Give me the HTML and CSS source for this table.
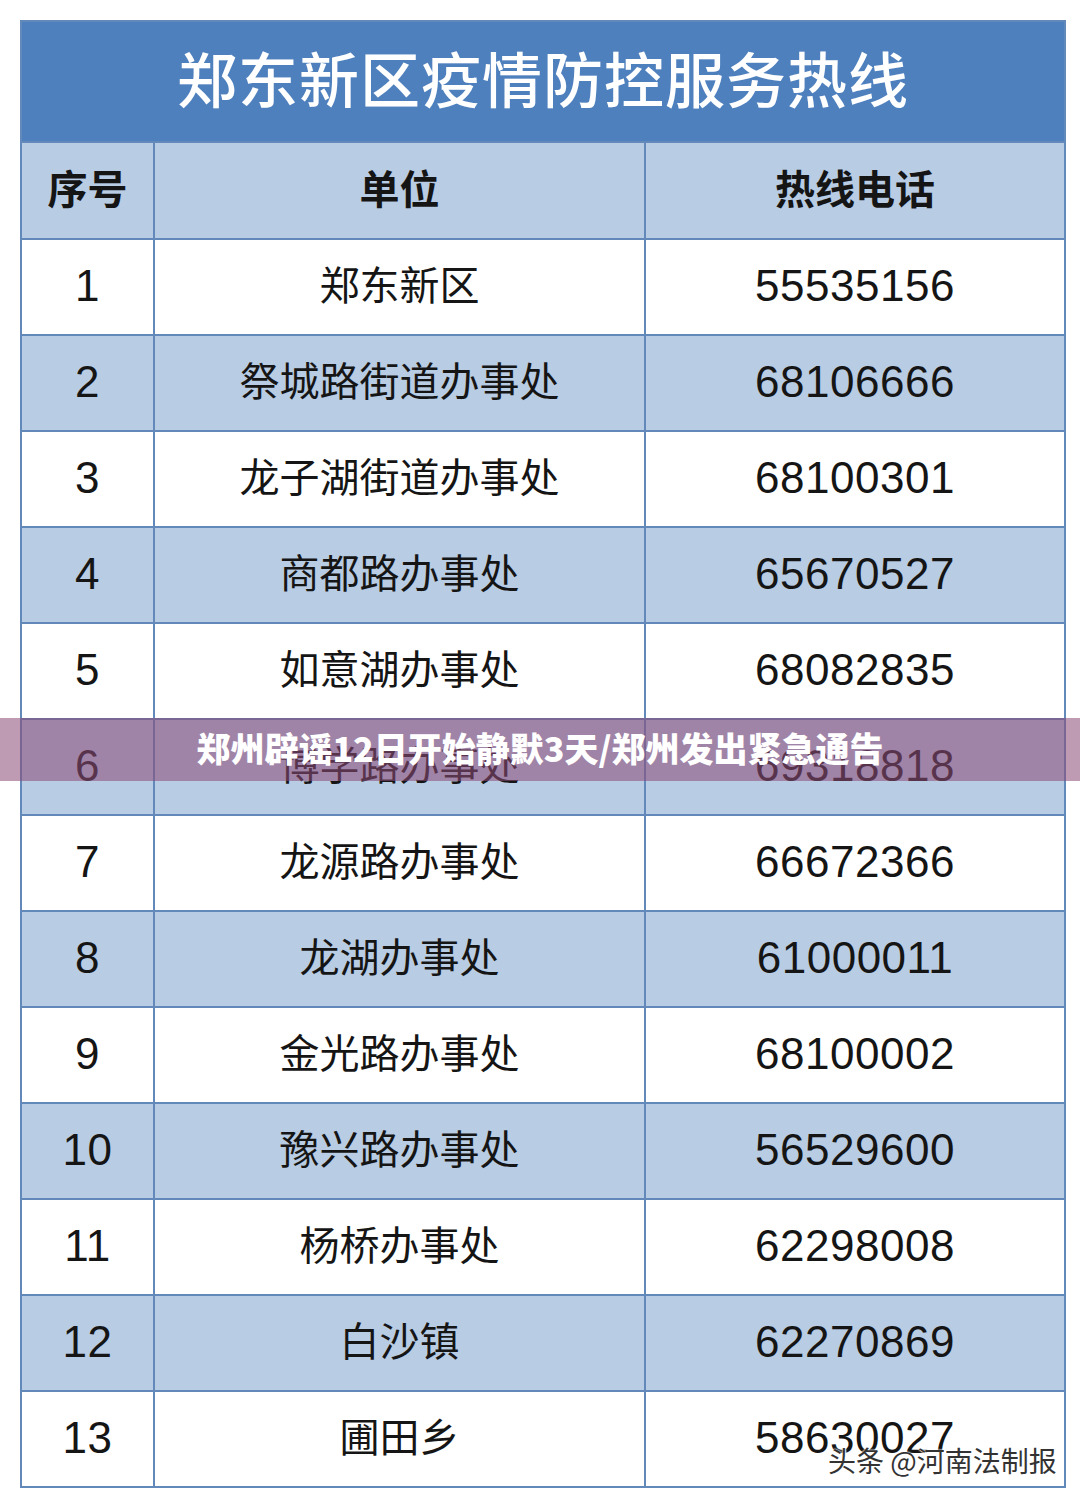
FILE: index.html
```html
<!DOCTYPE html>
<html lang="zh-CN">
<head>
<meta charset="utf-8">
<title>郑东新区疫情防控服务热线</title>
<link rel="stylesheet" href="styles.css">
</head>
<body>
<div class="page">
  <div class="sheet">
    <div class="title">郑东新区疫情防控服务热线</div>
    <div class="row head">
      <div class="cell">序号</div>
      <div class="cell">单位</div>
      <div class="cell">热线电话</div>
    </div>
    <div class="row"><div class="cell num">1</div><div class="cell">郑东新区</div><div class="cell num">55535156</div></div>
    <div class="row alt"><div class="cell num">2</div><div class="cell">祭城路街道办事处</div><div class="cell num">68106666</div></div>
    <div class="row"><div class="cell num">3</div><div class="cell">龙子湖街道办事处</div><div class="cell num">68100301</div></div>
    <div class="row alt"><div class="cell num">4</div><div class="cell">商都路办事处</div><div class="cell num">65670527</div></div>
    <div class="row"><div class="cell num">5</div><div class="cell">如意湖办事处</div><div class="cell num">68082835</div></div>
    <div class="row alt"><div class="cell num">6</div><div class="cell">博学路办事处</div><div class="cell num">69318818</div></div>
    <div class="row"><div class="cell num">7</div><div class="cell">龙源路办事处</div><div class="cell num">66672366</div></div>
    <div class="row alt"><div class="cell num">8</div><div class="cell">龙湖办事处</div><div class="cell num">61000011</div></div>
    <div class="row"><div class="cell num">9</div><div class="cell">金光路办事处</div><div class="cell num">68100002</div></div>
    <div class="row alt"><div class="cell num">10</div><div class="cell">豫兴路办事处</div><div class="cell num">56529600</div></div>
    <div class="row"><div class="cell num">11</div><div class="cell">杨桥办事处</div><div class="cell num">62298008</div></div>
    <div class="row alt"><div class="cell num">12</div><div class="cell">白沙镇</div><div class="cell num">62270869</div></div>
    <div class="row"><div class="cell num">13</div><div class="cell">圃田乡</div><div class="cell num">58630027</div></div>
  </div>
  <div class="banner">郑州辟谣12日开始静默3天/郑州发出紧急通告</div>
  <div class="mark">头条 @河南法制报</div>
</div>
</body>
</html>
```
FILE: styles.css
```css
html, body {
  margin: 0;
  padding: 0;
  background: #ffffff;
}
.page {
  position: relative;
  width: 1080px;
  height: 1501px;
  padding: 20px 0 0 20px;
  box-sizing: border-box;
  font-family: "Noto Sans CJK SC", "Noto Sans", sans-serif;
  color: #151515;
}
.sheet {
  width: 1046px;
  border: 2px solid #6289ba;
  box-sizing: border-box;
  background: #ffffff;
}
.title {
  height: 119px;
  background: #4f80be;
  color: #ffffff;
  font-size: 60px;
  font-weight: 500;
  letter-spacing: 1px;
  display: flex;
  align-items: center;
  justify-content: center;
  padding-bottom: 10px;
  box-sizing: border-box;
}
.row {
  display: grid;
  grid-template-columns: 131px 491px 1fr;
  height: 96px;
  border-top: 2px solid #6289ba;
  box-sizing: border-box;
}
.row.head {
  height: 97px;
  background: #b8cce4;
  font-weight: 700;
}
.row.alt {
  background: #b8cce4;
}
.cell {
  display: flex;
  align-items: center;
  justify-content: center;
  font-size: 40px;
  line-height: 1;
  padding-bottom: 8px;
  box-sizing: border-box;
}
.cell + .cell {
  border-left: 2px solid #6289ba;
}
.cell.num {
  font-family: "Liberation Sans", Arial, sans-serif;
  font-size: 44px;
  letter-spacing: 0.5px;
  padding-bottom: 3px;
}
.banner {
  position: absolute;
  left: 0;
  top: 718px;
  width: 1080px;
  height: 63px;
  background: rgba(140, 75, 120, 0.56);
  color: #ffffff;
  font-size: 34px;
  font-weight: 900;
  display: flex;
  align-items: center;
  justify-content: center;
  padding-bottom: 4px;
  box-sizing: border-box;
}
.mark {
  position: absolute;
  left: 828px;
  top: 1440px;
  font-size: 28px;
  color: #333333;
  text-shadow: 0 0 2px #ffffff, 0 0 2px #ffffff, 1px 1px 1px #ffffff;
  white-space: nowrap;
}
```
